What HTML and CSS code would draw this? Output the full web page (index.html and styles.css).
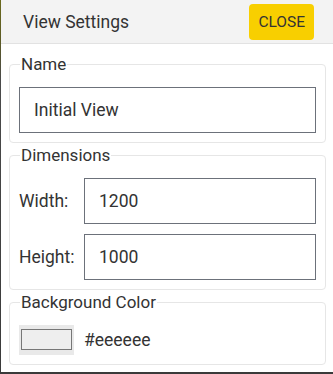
FILE: index.html
```html
<!DOCTYPE html>
<html lang="en">
<head>
    <meta charset="UTF-8">
    <meta name="viewport" content="width=device-width, initial-scale=1.0">
    <title>View Settings</title>
    <link rel="stylesheet" href="styles.css">
</head>
<body>
    <div class="dialog">
        <div class="dialog-header">
            <h2>View Settings</h2>
            <button class="close-btn">CLOSE</button>
        </div>
        <div class="dialog-body">
            <fieldset>
                <legend>Name</legend>
                <input type="text" class="full" value="Initial View">
            </fieldset>
            <fieldset>
                <legend>Dimensions</legend>
                <div class="row">
                    <label>Width:</label>
                    <input type="text" value="1200">
                </div>
                <div class="row">
                    <label>Height:</label>
                    <input type="text" value="1000">
                </div>
            </fieldset>
            <fieldset>
                <legend>Background Color</legend>
                <div class="color-row">
                    <span class="swatch"><span class="swatch-inner"></span></span>
                    <span class="color-value">#eeeeee</span>
                </div>
            </fieldset>
        </div>
    </div>
</body>
</html>
```
FILE: styles.css
```css
* {
    box-sizing: border-box;
    margin: 0;
    padding: 0;
    font-family: Roboto, 'Liberation Sans', sans-serif;
}

body {
    width: 333px;
    height: 374px;
    overflow: hidden;
    background: linear-gradient(to bottom, #6b6a1e 0, #5c5a24 40px, #4a4a4a 80px, #3a3a3a 100%);
}

.dialog {
    margin-left: 1px;
    height: 372px;
    background: #fff;
    color: #333;
}

.dialog-header {
    display: flex;
    align-items: center;
    justify-content: space-between;
    height: 44px;
    padding: 0 19px 0 22px;
    background: #f3f3f3;
    border-bottom: 1px solid #e2e2e2;
}

.dialog-header h2 {
    font-size: 17.5px;
    font-weight: 400;
    color: #333;
}

.close-btn {
    border: none;
    background: #f8cf00;
    color: #333;
    font-size: 15.5px;
    padding: 9px 9px;
    border-radius: 4px;
    cursor: pointer;
}

.dialog-body {
    padding: 10px 7px 0 8px;
}

fieldset {
    min-width: 0;
    border: 1px solid #e6e6e6;
    border-radius: 4px;
    padding: 13px 9px 9px;
    margin-bottom: 2px;
}

legend {
    font-size: 17px;
    line-height: 20px;
    color: #333;
    padding: 0 1px;
    margin-left: 1px;
}

input[type="text"] {
    height: 46px;
    border: 1px solid #6c717a;
    font-size: 17.5px;
    color: #333;
    padding: 0 14px;
    outline: none;
}

input.full {
    width: 100%;
}

.row {
    display: flex;
    align-items: center;
}

.row + .row {
    margin-top: 10px;
}

.row label {
    width: 65px;
    font-size: 17.5px;
    color: #333;
}

.row input {
    flex: 1;
    min-width: 0;
}

.color-row {
    display: flex;
    align-items: center;
    gap: 10px;
}

.swatch {
    display: flex;
    width: 55px;
    height: 30px;
    padding: 4px 2px 5px;
    background: #e9e9e9;
}

.swatch-inner {
    flex: 1;
    background: #eeeeee;
    border: 1px solid #777;
}

.color-value {
    font-size: 17.5px;
    color: #333;
}
```
